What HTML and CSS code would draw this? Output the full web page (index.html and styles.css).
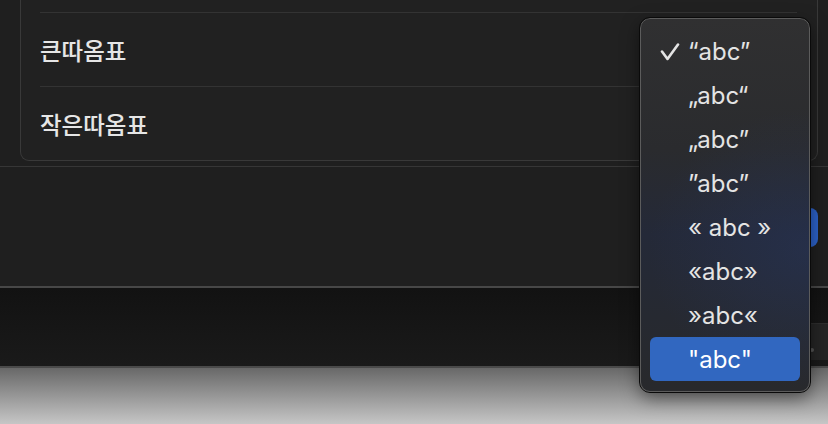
FILE: index.html
```html
<!DOCTYPE html>
<html lang="ko">
<head>
    <meta charset="UTF-8">
    <meta name="viewport" content="width=device-width, initial-scale=1.0">
    <title>따옴표 설정</title>
    <link rel="stylesheet" href="styles.css">
</head>
<body>
    <div class="window">
        <div class="content">
            <div class="group">
                <div class="row">큰따옴표</div>
                <div class="row">작은따옴표</div>
            </div>
        </div>
        <div class="footer">
            <!-- label is hidden under the popup menu -->
            <button class="btn-primary" aria-label="완료"></button>
        </div>
    </div>

    <div class="panel">
        <div class="panel-slot"><span class="dot"></span></div>
    </div>
    <div class="desktop"></div>

    <!-- popup menu over the window -->
    <ul class="menu">
        <li class="item checked"><svg class="check" width="20" height="18" viewBox="0 0 20 18"><path d="M2 8.5 L7.5 16 L18 1.5" fill="none" stroke="#e4e4e4" stroke-width="2.6" stroke-linecap="round" stroke-linejoin="round"/></svg>“abc”</li>
        <li class="item">„abc“</li>
        <li class="item">„abc”</li>
        <li class="item">”abc”</li>
        <li class="item">« abc »</li>
        <li class="item">«abc»</li>
        <li class="item">»abc«</li>
        <li class="item active">"abc"</li>
    </ul>
</body>
</html>
```

FILE: styles.css
```css
html, body {
    margin: 0;
    padding: 0;
}
body {
    width: 828px;
    height: 424px;
    overflow: hidden;
    position: relative;
    background: #1f1f1f;
    font-family: Inter, "Noto Sans CJK KR", sans-serif;
    color: #e2e2e2;
}
.window {
    background: #1f1f1f;
    height: 286px;
    display: flex;
    flex-direction: column;
}
.content {
    height: 166px;
    border-bottom: 1px solid #363636;
}
.group {
    margin: 0 10px 0 20px;
    padding-top: 12px;
    border: 1px solid #393939;
    border-top: none;
    border-radius: 0 0 9px 9px;
    background: #212121;
}
.row {
    height: 73px;
    margin: 0 20px 0 19px;
    border-top: 1px solid #333;
    display: flex;
    align-items: center;
    font-family: "Noto Sans CJK KR", sans-serif;
    font-size: 23.5px;
    font-weight: 500;
    color: #e6e6e6;
}
.footer {
    flex: 1;
    display: flex;
    justify-content: flex-end;
    align-items: flex-start;
    padding: 41px 10px 0 0;
}
.btn-primary {
    height: 39px;
    width: 90px;
    border: none;
    border-radius: 8px;
    background: #2c62c9;
}
.panel {
    height: 78px;
    border-top: 2px solid #474747;
    border-bottom: 2px solid #4a4a4a;
    background: linear-gradient(#121212, #1a1a1a);
    display: flex;
    justify-content: flex-end;
    align-items: flex-end;
}
.panel-slot {
    width: 18px;
    height: 36px;
    margin-bottom: 6px;
    background: #252525;
    border-top: 1px solid #2e2e2e;
    display: flex;
    align-items: center;
    padding-left: 4px;
}
.dot {
    width: 4px;
    height: 4px;
    border-radius: 50%;
    background: #555;
    margin-top: 16px;
}
.desktop {
    height: 56px;
    background: linear-gradient(#686868, #c6c6c6);
}
.menu {
    position: absolute;
    left: 640px;
    top: 18px;
    width: 168px;
    margin: 0;
    padding: 10px 0;
    list-style: none;
    border: 1px solid #5c5c5c;
    outline: 1px solid #0a0a0a;
    border-radius: 10px;
    background:
        radial-gradient(ellipse 160px 140px at 100% 230px, rgba(40, 55, 95, 0.45), transparent),
        linear-gradient(#303031 0%, #2a2b2e 35%, #242938 58%, #262931 80%, #28292c 100%);
    box-shadow: 0 6px 18px rgba(0, 0, 0, 0.5);
}
.item {
    position: relative;
    height: 44px;
    margin: 0 9px;
    padding-left: 38px;
    border-radius: 6px;
    display: flex;
    align-items: center;
    font-size: 24px;
    color: #e4e4e4;
    white-space: nowrap;
}
.check {
    position: absolute;
    left: 10px;
    top: 14px;
}
.item.active {
    background: #3167c0;
    color: #fff;
}
```
